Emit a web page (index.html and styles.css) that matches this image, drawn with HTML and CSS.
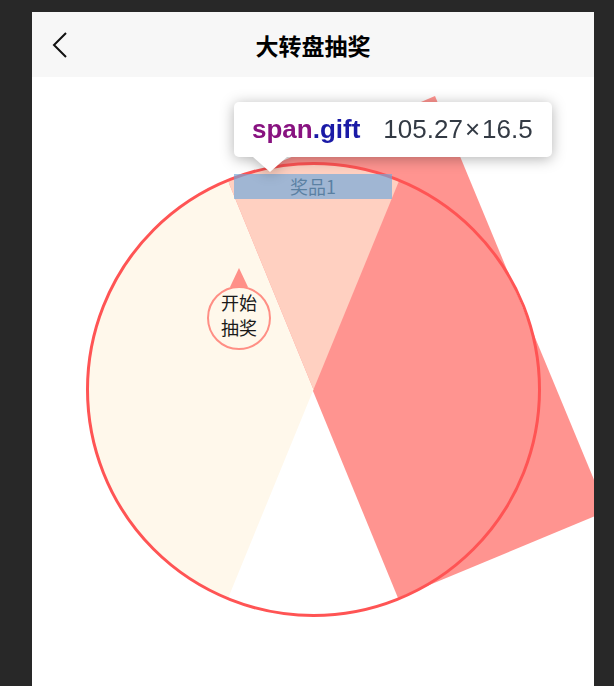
FILE: index.html
```html
<!DOCTYPE html>
<html lang="zh">
<head>
<meta charset="utf-8">
<title>大转盘抽奖</title>
<link rel="stylesheet" href="styles.css">
</head>
<body>
<div class="page">
  <header class="nav">
    <svg class="back" width="16" height="26" viewBox="0 0 16 26"><path d="M14 1 L2 13 L14 25" fill="none" stroke="#111" stroke-width="2"/></svg>
    <h1 class="title">大转盘抽奖</h1>
    <span></span>
  </header>
  <main class="stage">
    <svg class="wheel" width="562" height="609" viewBox="32 77 562 609">
      <defs>
        <clipPath id="disc"><circle cx="313.5" cy="389.5" r="226"/></clipPath>
      </defs>
      <polygon points="435,96 607,511 398,598 228,184" fill="#ff9490"/>
      <g clip-path="url(#disc)">
        <polygon points="313.5,389.5 190.5,89.5 32,89.5 32,690 190.5,690" fill="#fff8eb"/>
        <polygon points="313.5,389.5 190.5,89.5 436.5,89.5" fill="#ffd0c1"/>
      </g>
      <circle cx="313.5" cy="389.5" r="226" fill="none" stroke="#ff5454" stroke-width="3"/>
    </svg>
    <span class="gift">奖品1</span>
    <div class="start"><span>开始<br>抽奖</span></div>
    <div class="tip">
      <div class="tip-box">
        <span class="sel"><span class="tag">span</span><span class="cls">.gift</span></span>
        <span class="dims">105.27<span class="x">×</span>16.5</span>
      </div>
    </div>
  </main>
</div>
</body>
</html>
```
FILE: styles.css
```css
html, body {
  margin: 0;
  padding: 0;
}
body {
  background: #282828;
  height: 686px;
  overflow: hidden;
  font-family: "Noto Sans CJK SC", "Liberation Sans", sans-serif;
}
.page {
  margin: 12px 0 0 32px;
  width: 562px;
  height: 674px;
  background: #fff;
  overflow: hidden;
}
.nav {
  height: 65px;
  background: #f7f7f7;
  display: grid;
  grid-template-columns: 1fr auto 1fr;
  align-items: center;
}
.back {
  display: block;
  margin-left: 20px;
  margin-top: 1px;
}
.title {
  margin: 0;
  font-size: 23px;
  font-weight: 700;
  color: #000;
  line-height: 30px;
}
.stage {
  position: relative;
  height: 609px;
}
.wheel {
  display: block;
}
.gift {
  position: absolute;
  left: 202px;
  top: 97px;
  width: 158px;
  height: 25px;
  line-height: 25px;
  font-size: 18px;
  text-align: center;
  color: #333;
}
.gift::after {
  content: "";
  position: absolute;
  inset: 0;
  background: rgba(111, 168, 220, 0.66);
}
.start {
  position: absolute;
  left: 175px;
  top: 209px;
  width: 60px;
  height: 60px;
  border: 2px solid #ff8f85;
  border-radius: 50%;
  background: #fff8eb;
  display: flex;
  align-items: center;
  justify-content: center;
  font-size: 18px;
  line-height: 25px;
  color: #1a1a1a;
  text-align: center;
}
.start span {
  margin-top: -6px;
}
.start::before {
  content: "";
  position: absolute;
  left: 50%;
  top: -20px;
  margin-left: -9px;
  border-left: 9px solid transparent;
  border-right: 9px solid transparent;
  border-bottom: 19px solid #ff9088;
}
.tip {
  position: absolute;
  left: 202px;
  top: 25px;
  filter: drop-shadow(0 2px 7px rgba(0, 0, 0, 0.3));
}
.tip-box {
  position: relative;
  width: 318px;
  height: 55px;
  box-sizing: border-box;
  padding-left: 18px;
  background: #fff;
  border-radius: 5px;
  display: flex;
  align-items: center;
  gap: 23px;
  font-family: "Liberation Sans", Arial, sans-serif;
  font-size: 26px;
}
.tip-box::after {
  content: "";
  position: absolute;
  left: 19px;
  top: 55px;
  border-left: 17px solid transparent;
  border-right: 17px solid transparent;
  border-top: 15px solid #fff;
}
.sel {
  font-weight: 700;
}
.tag {
  color: #881280;
}
.cls {
  color: #1a1aa6;
}
.dims {
  color: #333a44;
}
.x {
  margin: 0 2px;
}
```
